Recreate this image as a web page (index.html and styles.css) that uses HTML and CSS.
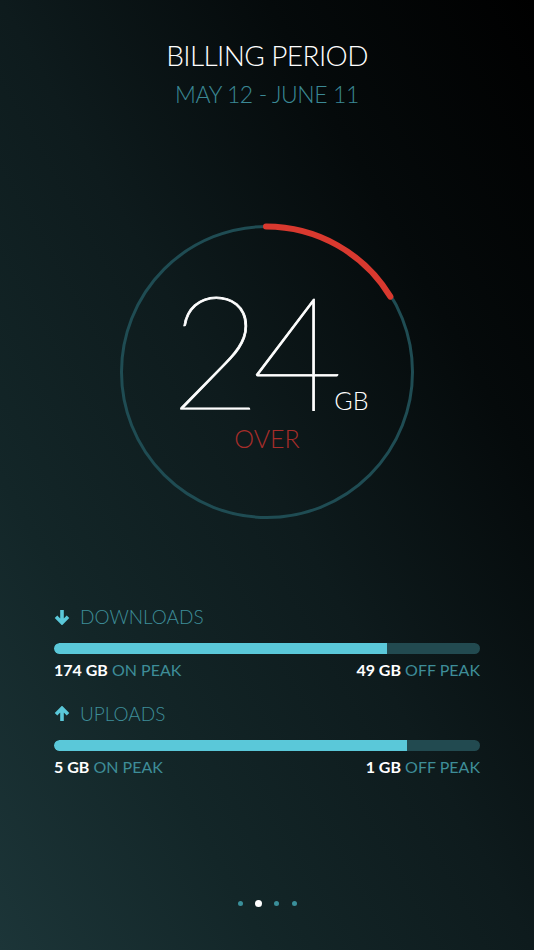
FILE: index.html
```html
<!DOCTYPE html>
<html>
<head>
<meta charset="utf-8">
<link rel="stylesheet" href="styles.css">
</head>
<body>
<div class="screen">
  <header class="period">
    <div class="period-title">BILLING PERIOD</div>
    <div class="period-dates">MAY 12 - JUNE 11</div>
  </header>

  <div class="gauge">
    <svg class="gauge-ring" width="300" height="300" viewBox="0 0 300 300">
      <circle cx="150" cy="150" r="145.5" fill="none" stroke="#1f4c53" stroke-width="3"/>
      <path d="M149 4.5 A145.5 145.5 0 0 1 273.4 74.6" fill="none" stroke="#d9392f" stroke-width="6" stroke-linecap="round"/>
    </svg>
    <div class="gauge-content">
      <div class="gauge-value"><span class="gauge-number">24</span><span class="gauge-unit">GB</span></div>
      <div class="gauge-label">OVER</div>
    </div>
  </div>

  <section class="stats">
    <div class="stat">
      <div class="stat-head">
        <svg class="stat-icon" width="16" height="16" viewBox="0 0 16 16">
          <path d="M8 1 V13.5 M2 7.8 L8 13.8 L14 7.8" fill="none" stroke="#5ac8d9" stroke-width="3.6"/>
        </svg>
        <span>DOWNLOADS</span>
      </div>
      <div class="bar"><div class="bar-fill" style="width:78.2%"></div></div>
      <div class="stat-labels">
        <span><b>174 GB</b> ON PEAK</span>
        <span><b>49 GB</b> OFF PEAK</span>
      </div>
    </div>
    <div class="stat stat-up">
      <div class="stat-head">
        <svg class="stat-icon" width="16" height="16" viewBox="0 0 16 16">
          <path d="M8 15 V2.5 M2 8.2 L8 2.2 L14 8.2" fill="none" stroke="#5ac8d9" stroke-width="3.6"/>
        </svg>
        <span>UPLOADS</span>
      </div>
      <div class="bar"><div class="bar-fill" style="width:82.9%"></div></div>
      <div class="stat-labels">
        <span><b>5 GB</b> ON PEAK</span>
        <span><b>1 GB</b> OFF PEAK</span>
      </div>
    </div>
  </section>

  <nav class="pager">
    <span class="pager-cell"><span class="dot"></span></span>
    <span class="pager-cell"><span class="dot dot-active"></span></span>
    <span class="pager-cell"><span class="dot"></span></span>
    <span class="pager-cell"><span class="dot"></span></span>
  </nav>
</div>
</body>
</html>
```

FILE: styles.css
```css
html, body {
  margin: 0;
  padding: 0;
}
body {
  width: 534px;
  height: 950px;
  overflow: hidden;
  background: linear-gradient(to top right, #1c3538 0%, #132628 25%, #0e1b1d 50%, #050a0b 75%, #000000 100%);
  font-family: Lato, "Open Sans", sans-serif;
  color: #fff;
}
.screen {
  display: flex;
  flex-direction: column;
  align-items: center;
  height: 950px;
  padding-top: 37px;
  box-sizing: border-box;
}
.period {
  display: flex;
  flex-direction: column;
  align-items: center;
}
.period-title {
  font-size: 28px;
  line-height: 36px;
  font-weight: 300;
  letter-spacing: -0.6px;
  color: #ffffff;
}
.period-dates {
  margin-top: 6px;
  font-size: 23px;
  line-height: 30px;
  font-weight: 300;
  letter-spacing: -0.4px;
  color: #3b8995;
}
.gauge {
  margin-top: 113px;
  display: grid;
  width: 300px;
  height: 300px;
}
.gauge-ring, .gauge-content {
  grid-area: 1 / 1;
}
.gauge-content {
  display: flex;
  flex-direction: column;
  align-items: center;
  padding-top: 67px;
}
.gauge-value {
  align-self: stretch;
  display: flex;
  align-items: baseline;
  line-height: 120px;
  padding-left: 53px;
}
.gauge-number {
  font-size: 158px;
  font-weight: 200;
  letter-spacing: -10px;
  line-height: 120px;
  -webkit-text-stroke: 0.8px #ffffff;
}
.gauge-unit {
  font-size: 25px;
  line-height: 30px;
  font-weight: 300;
  margin-left: 1px;
}
.gauge-label {
  margin-top: 8px;
  font-size: 25px;
  line-height: 30px;
  font-weight: 300;
  color: #a62d2a;
}
.stats {
  margin-top: 83px;
  width: 426px;
  display: flex;
  flex-direction: column;
}
.stat-up {
  margin-top: 21px;
}
.stat-head {
  display: flex;
  align-items: center;
  gap: 10px;
  font-size: 19px;
  line-height: 24px;
  font-weight: 300;
  color: #3e8e99;
}
.stat-icon {
  display: block;
  margin-top: -1px;
}
.bar {
  margin-top: 14px;
  height: 11px;
  border-radius: 6px;
  background: #224a50;
  overflow: hidden;
}
.bar-fill {
  height: 100%;
  background: #5ac8d9;
  border-radius: 6px 0 0 6px;
}
.stat-labels {
  margin-top: 5px;
  display: flex;
  justify-content: space-between;
  font-size: 16px;
  line-height: 22px;
  color: #3e8d98;
}
.stat-labels b {
  color: #ffffff;
  font-weight: 700;
}
.pager {
  margin-top: 122px;
  display: flex;
  align-items: center;
  height: 7px;
}
.pager-cell {
  width: 18px;
  display: flex;
  justify-content: center;
}
.dot {
  display: block;
  width: 5px;
  height: 5px;
  border-radius: 50%;
  background: #3a8f9a;
}
.dot-active {
  width: 7px;
  height: 7px;
  background: #ffffff;
}
```
